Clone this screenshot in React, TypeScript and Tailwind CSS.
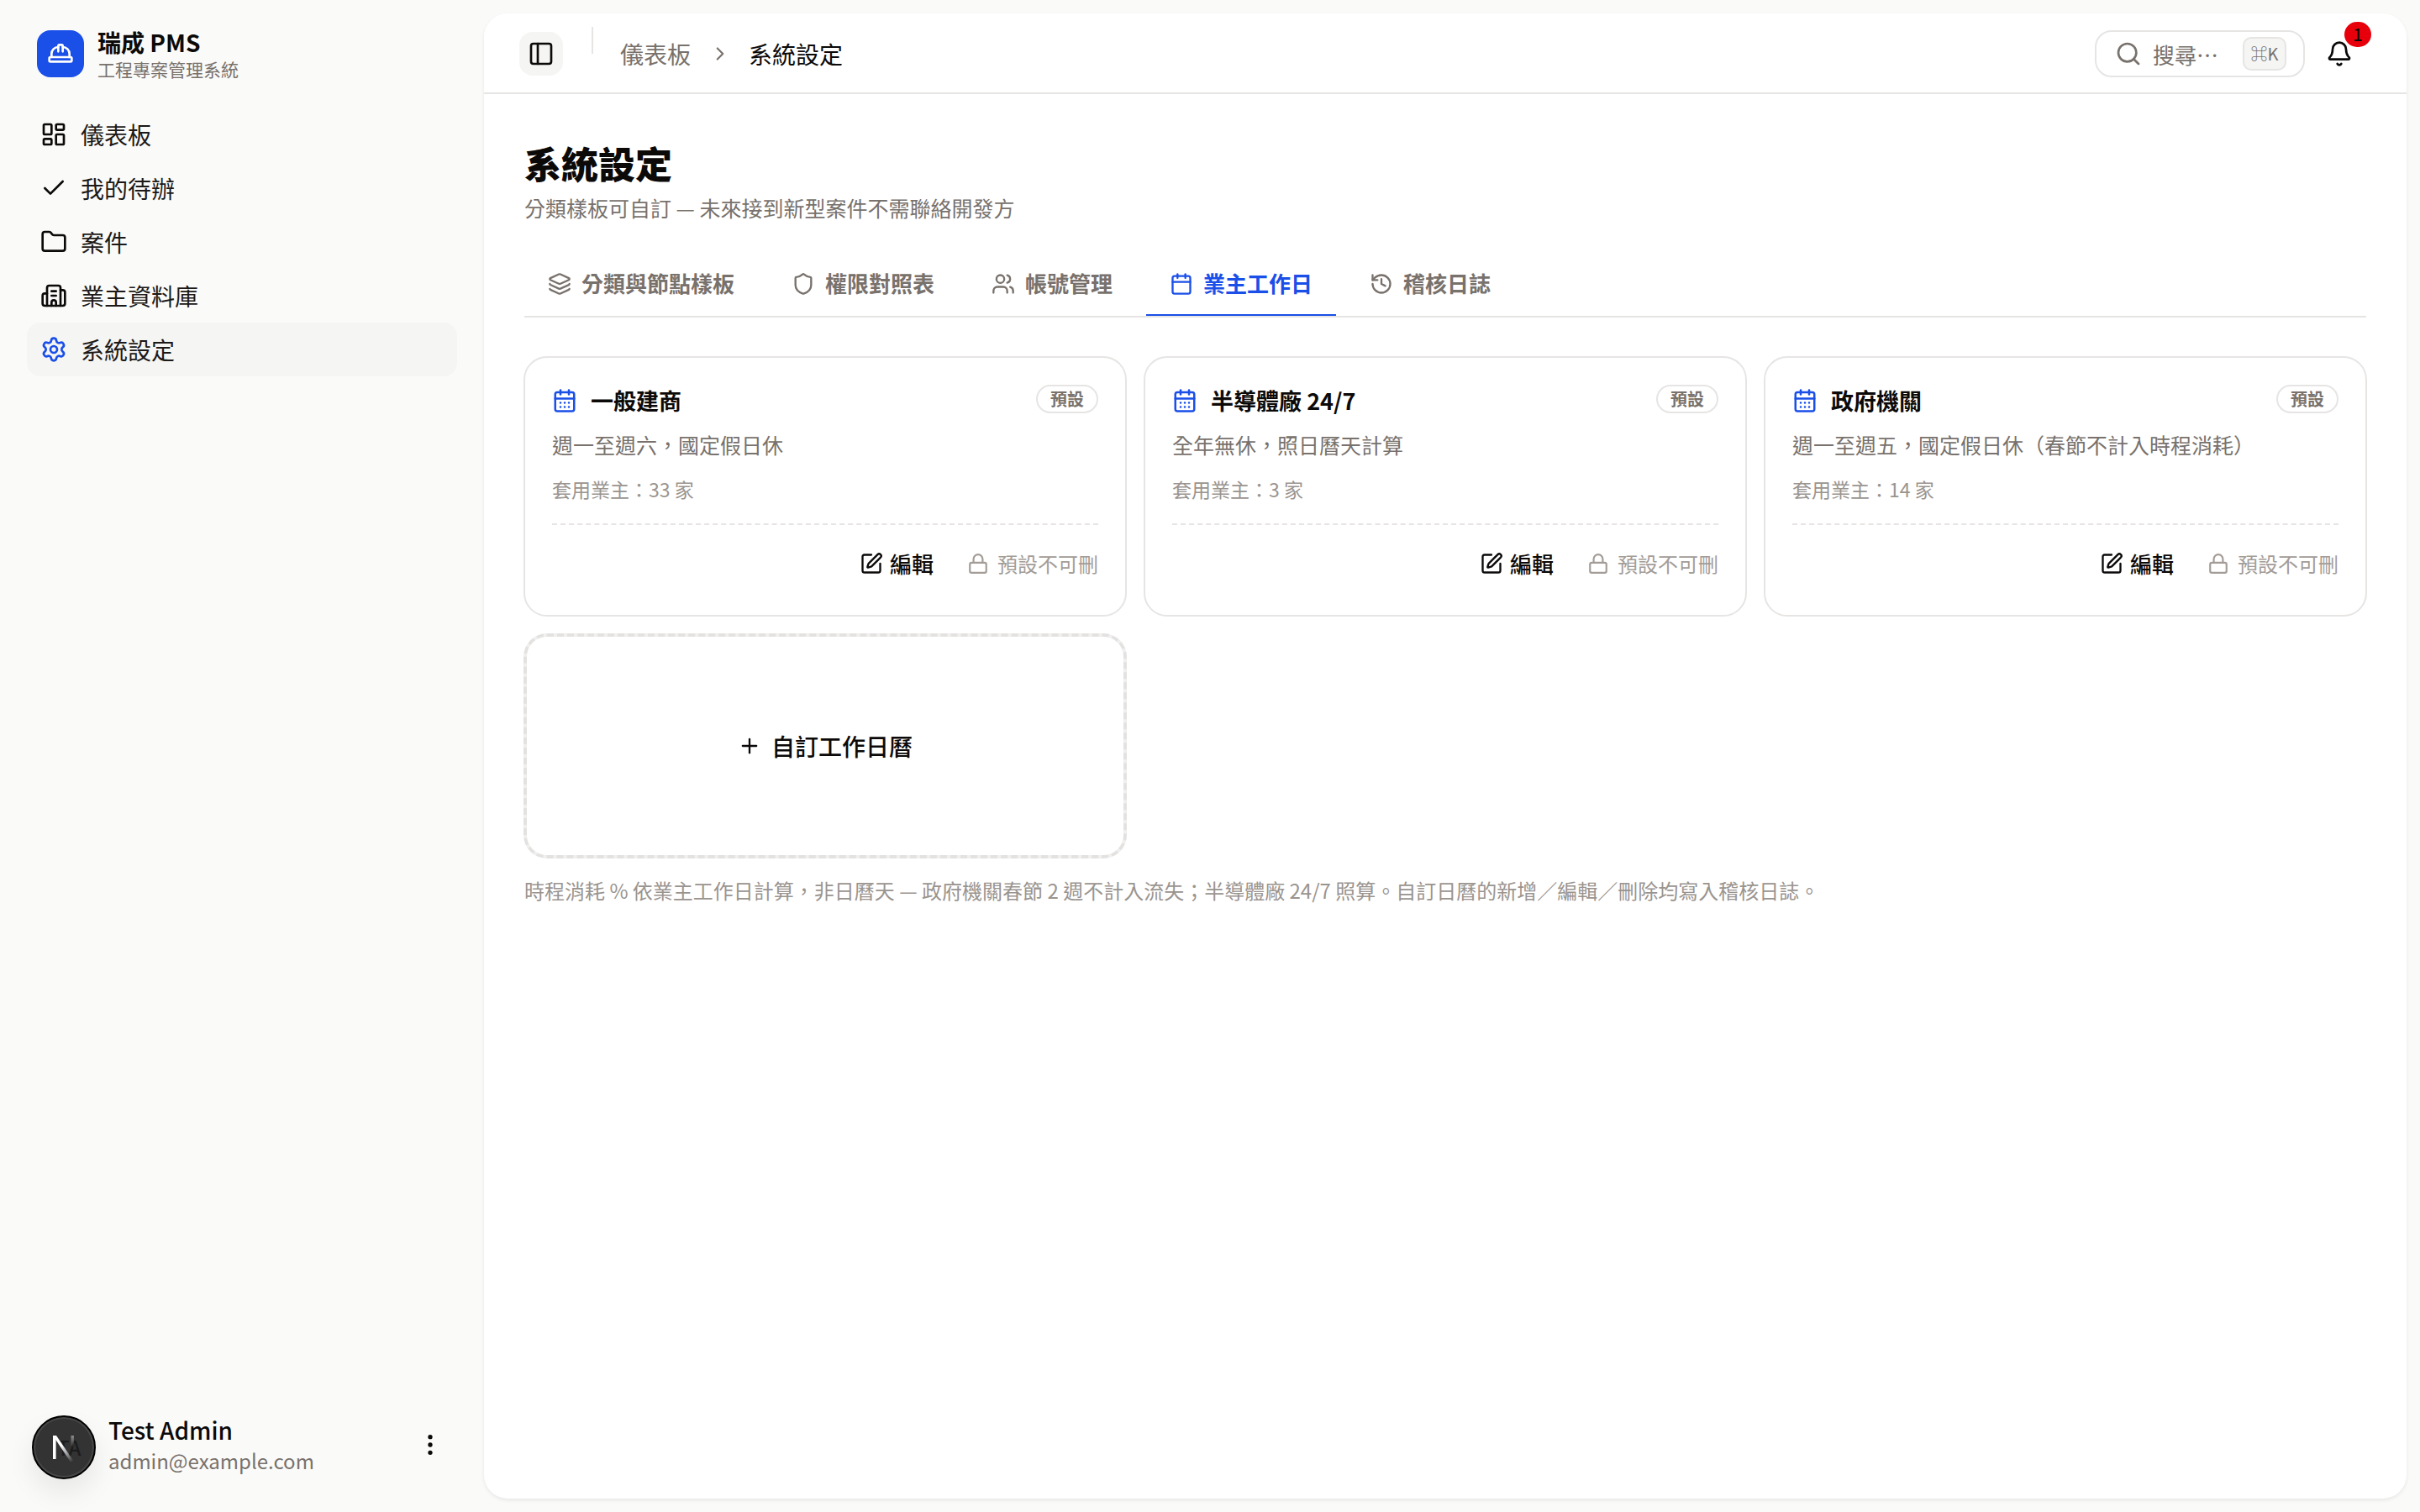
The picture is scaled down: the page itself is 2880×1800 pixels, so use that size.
import {
  Bell,
  Building2,
  Calendar,
  CalendarDays,
  Check,
  ChevronRight,
  EllipsisVertical,
  Folder,
  HardHat,
  History,
  Layers,
  LayoutDashboard,
  Lock,
  PanelLeft,
  Plus,
  Search,
  Settings,
  Shield,
  SquarePen,
  Users,
} from 'lucide-react'

const navItems = [
  { label: '儀表板', icon: LayoutDashboard },
  { label: '我的待辦', icon: Check },
  { label: '案件', icon: Folder },
  { label: '業主資料庫', icon: Building2 },
  { label: '系統設定', icon: Settings, active: true },
]

const tabs = [
  { label: '分類與節點樣板', icon: Layers },
  { label: '權限對照表', icon: Shield },
  { label: '帳號管理', icon: Users },
  { label: '業主工作日', icon: Calendar, active: true },
  { label: '稽核日誌', icon: History },
]

const calendars = [
  { name: '一般建商', desc: '週一至週六，國定假日休', owners: '套用業主：33 家' },
  { name: '半導體廠 24/7', desc: '全年無休，照日曆天計算', owners: '套用業主：3 家' },
  { name: '政府機關', desc: '週一至週五，國定假日休（春節不計入時程消耗）', owners: '套用業主：14 家' },
]

function Sidebar() {
  return (
    <aside className="flex h-full w-[560px] shrink-0 flex-col">
      <div className="mt-9 flex h-14 items-start gap-4 px-11">
        <div className="flex h-14 w-14 items-center justify-center rounded-2xl bg-[#1a4fe8] text-white">
          <HardHat size={32} />
        </div>
        <div className="flex flex-col">
          <span className="-mt-0.5 mb-0.5 text-[28px] leading-8 font-bold text-[#0c0a09]">瑞成 PMS</span>
          <span className="text-[21px] leading-7 text-[#78716c]">工程專案管理系統</span>
        </div>
      </div>

      <nav className="mt-9 flex flex-col pr-4 pl-8">
        {navItems.map((item) => (
          <div
            key={item.label}
            className={`flex h-16 items-center gap-4 rounded-2xl px-4 text-[28px] text-[#1c1917] ${item.active ? 'bg-[#f5f5f4]' : ''}`}
          >
            <item.icon size={32} className={item.active ? 'text-[#1a4fe8]' : 'text-[#0c0a09]'} />
            <span>{item.label}</span>
          </div>
        ))}
      </nav>

      <div className="mt-auto flex items-center pr-8 pb-[38px] pl-[38px]">
        <div className="relative flex h-[76px] w-[76px] shrink-0 items-center justify-center rounded-full border-2 border-black bg-[#333333] shadow-[inset_0_0_0_2px_rgba(255,255,255,0.1),0_16px_32px_rgba(0,0,0,0.08)]">
          <span className="absolute left-[28px] text-[24px] leading-none font-medium text-[#1c1c1c]">TA</span>
          <svg width="36" height="36" viewBox="0 0 36 36" fill="none" className="relative">
            <defs>
              <linearGradient id="nfade" x1="8" y1="6" x2="30" y2="34" gradientUnits="userSpaceOnUse">
                <stop offset="0.35" stopColor="#ffffff" />
                <stop offset="1" stopColor="#ffffff" stopOpacity="0" />
              </linearGradient>
              <linearGradient id="nbar" x1="28" y1="4" x2="28" y2="18" gradientUnits="userSpaceOnUse">
                <stop stopColor="#ffffff" stopOpacity="0.45" />
                <stop offset="1" stopColor="#ffffff" stopOpacity="0" />
              </linearGradient>
            </defs>
            <path d="M5 4h3.6v28H5z" fill="#ffffff" />
            <path d="M5 4h4l21 31h-4.4z" fill="url(#nfade)" />
            <path d="M26.5 4h3.4v18h-3.4z" fill="url(#nbar)" />
          </svg>
        </div>
        <div className="mb-[5px] ml-[15px] flex min-w-0 flex-col">
          <span className="text-[28px] leading-9 font-medium text-[#0c0a09]">Test Admin</span>
          <span className="mt-px text-[24px] leading-9 text-[#78716c]">admin@example.com</span>
        </div>
        <EllipsisVertical size={32} className="mb-1.5 ml-auto text-[#0c0a09]" />
      </div>
    </aside>
  )
}

function Header() {
  return (
    <header className="flex h-24 shrink-0 items-center border-b-2 border-[#e7e5e4] pt-0.5 pr-[60px] pl-[42px]">
      <button className="flex h-[52px] w-[52px] items-center justify-center rounded-2xl bg-[#f5f5f4] text-[#0c0a09]">
        <PanelLeft size={32} />
      </button>
      <div className="mb-8 ml-[34px] h-8 w-0.5 bg-[#e7e5e4]" />
      <div className="ml-8 flex items-center text-[28px]">
        <span className="text-[#78716c]">儀表板</span>
        <ChevronRight size={26} className="mr-[21px] ml-[22px] text-[#78716c]" />
        <span className="text-[#0c0a09]">系統設定</span>
      </div>
      <div className="ml-auto flex h-14 w-[250px] items-center rounded-[20px] border-2 border-[#e7e5e4] pr-5 pl-[22px]">
        <Search size={32} className="text-[#78716c]" />
        <span className="ml-[13px] text-[26px] text-[#78716c]">搜尋…</span>
        <span className="ml-auto flex h-10 w-[52px] items-center justify-center rounded-[10px] border-2 border-[#e7e5e4] bg-[#f5f5f4] text-[20px] text-[#78716c]">
          ⌘K
        </span>
      </div>
      <div className="relative ml-[21px] flex h-10 w-10 items-center justify-center text-[#0c0a09]">
        <Bell size={32} />
        <span className="absolute -top-[18px] -right-[18px] flex h-[30px] w-8 items-center justify-center rounded-full bg-[#e7000b] text-[20px] leading-none font-medium text-[#0c0a09]">
          1
        </span>
      </div>
    </header>
  )
}

function CalendarCard({ name, desc, owners }: { name: string; desc: string; owners: string }) {
  return (
    <div className="flex h-[310px] flex-col rounded-[28px] border-2 border-[#e7e5e4] bg-white px-[32px] pt-[33px]">
      <div className="flex h-9 items-center justify-between">
        <div className="flex items-center gap-4">
          <CalendarDays size={30} className="text-[#1a4fe8]" />
          <span className="text-[27px] font-bold text-[#0c0a09]">{name}</span>
        </div>
        <span className="-mt-1 flex h-[34px] items-center rounded-full border-2 border-[#e7e5e4] px-[15px] text-[20px] font-semibold text-[#78716c]">
          預設
        </span>
      </div>
      <p className="mt-4 text-[25px] leading-9 text-[#78716c]">{desc}</p>
      <p className="mt-[17px] text-[23px] leading-9 text-[#9a948f]">{owners}</p>
      <div className="mt-[23px] border-t-2 border-dashed border-[#e7e5e4]" />
      <div className="mt-[26px] flex items-center justify-end gap-10">
        <div className="flex items-center gap-2 text-[26px] font-medium text-[#0c0a09]">
          <SquarePen size={28} />
          <span>編輯</span>
        </div>
        <div className="flex items-center gap-[10px] text-[24px] text-[#a39c97]">
          <Lock size={26} />
          <span>預設不可刪</span>
        </div>
      </div>
    </div>
  )
}

export default function App() {
  return (
    <div className="flex h-[1800px] w-[2880px] overflow-hidden bg-[#fafaf9] font-['Noto_Sans_CJK_TC','Noto_Sans',sans-serif]">
      <Sidebar />
      <main className="m-4 flex min-w-0 flex-1 flex-col rounded-[28px] bg-white shadow-[0_2px_4px_rgba(0,0,0,0.08)]">
        <Header />
        <div className="flex flex-col px-12 pt-14">
          <h1 className="text-[44px] leading-[52px] font-black text-[#0c0a09]">系統設定</h1>
          <p className="mt-[9px] text-[25px] leading-9 text-[#78716c]">
            分類樣板可自訂 — 未來接到新型案件不需聯絡開發方
          </p>

          <div className="mt-[35px] flex h-[78px] gap-3 border-b-2 border-[#e7e5e4]">
            {tabs.map((tab) => (
              <div
                key={tab.label}
                className={`flex items-center gap-3 border-b-2 px-7 text-[26px] font-semibold ${tab.active ? 'border-[#1a4fe8] text-[#1a4fe8]' : 'border-transparent text-[#78716c]'}`}
              >
                <tab.icon size={28} className="mt-0.5" />
                <span className="-mt-0.5">{tab.label}</span>
              </div>
            ))}
          </div>

          <div className="-mx-px mt-[46px] grid grid-cols-3 gap-5">
            {calendars.map((cal) => (
              <CalendarCard key={cal.name} {...cal} />
            ))}
            <div className="h-[268px] rounded-[28px] border-[4px] border-dashed border-[#e4e2e1] bg-[#f0efee]">
              <div className="flex h-full items-center justify-center gap-3 rounded-[24px] bg-white text-[28px] font-medium text-[#0c0a09]">
                <Plus size={28} />
                <span>自訂工作日曆</span>
              </div>
            </div>
          </div>

          <p className="mt-5 text-[24px] leading-9 text-[#9a948f]">
            時程消耗 % 依業主工作日計算，非日曆天 — 政府機關春節 2 週不計入流失；半導體廠 24/7 照算。自訂日曆的新增／編輯／刪除均寫入稽核日誌。
          </p>
        </div>
      </main>
    </div>
  )
}
